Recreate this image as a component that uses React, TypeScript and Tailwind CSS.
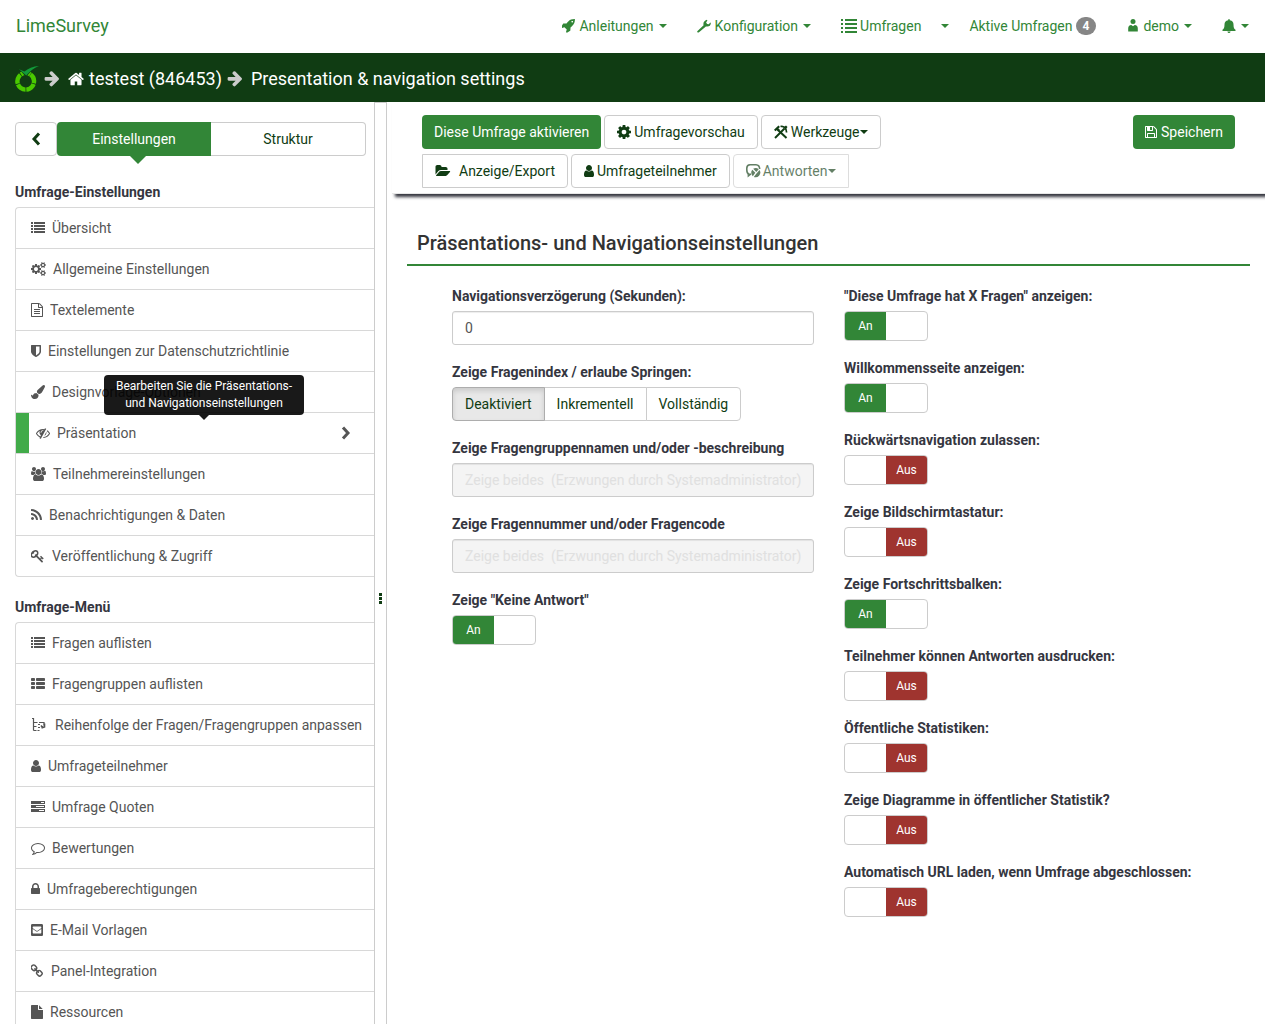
import { useState } from 'react';
import type { ReactNode } from 'react';
import { FaEnvelopeSquare } from 'react-icons/fa';

type GlyphProps = { d: string; box: string; w: string; h?: string };

function Glyph({ d, box, w, h = 'h-[14px]' }: GlyphProps) {
  return (
    <svg viewBox={box} className={`shrink-0 ${w} ${h}`} fill="currentColor" aria-hidden="true">
      <path d={d} />
    </svg>
  );
}

const P = {
  cogs: 'M896 896q0-106-75-181t-181-75-181 75-75 181 75 181 181 75 181-75 75-181zm768 512q0-52-38-90t-90-38-90 38-38 90q0 53 37.5 90.5t90.5 37.5 90.5-37.5 37.5-90.5zm0-1024q0-52-38-90t-90-38-90 38-38 90q0 53 37.5 90.5t90.5 37.5 90.5-37.5 37.5-90.5zm-384 421v185q0 10-7 19.5t-16 10.5l-155 24q-11 35-32 76 34 48 90 115 7 11 7 20 0 12-7 19-23 30-82.5 89.5t-78.5 59.5q-11 0-21-7l-115-90q-37 19-77 31-11 108-23 155-7 24-30 24h-186q-11 0-20-7.5t-10-17.5l-23-153q-34-10-75-31l-118 89q-7 7-20 7-11 0-21-8-144-133-144-160 0-9 7-19 10-14 41-53t47-61q-23-44-35-82l-152-24q-10-1-17-9.5t-7-19.5v-185q0-10 7-19.5t16-10.5l155-24q11-35 32-76-34-48-90-115-7-11-7-20 0-12 7-20 22-30 82-89t79-59q11 0 21 7l115 90q34-18 77-32 11-108 23-154 7-24 30-24h186q11 0 20 7.5t10 17.5l23 153q34 10 75 31l118-89q8-7 20-7 11 0 21 8 144 133 144 160 0 8-7 19-12 16-42 54t-45 60q23 48 34 82l152 23q10 2 17 10.5t7 19.5zm640 533v140q0 16-149 31-12 27-30 52 51 113 51 138 0 4-4 7-122 71-124 71-8 0-46-47t-52-68q-20 2-30 2t-30-2q-14 21-52 68t-46 47q-2 0-124-71-4-3-4-7 0-25 51-138-18-25-30-52-149-15-149-31v-140q0-16 149-31 13-29 30-52-51-113-51-138 0-4 4-7 4-2 35-20t59-34 30-16q8 0 46 46.5t52 67.5q20-2 30-2t30 2q51-71 92-112l6-2q4 0 124 70 4 3 4 7 0 25-51 138 17 23 30 52 149 15 149 31zm0-1024v140q0 16-149 31-12 27-30 52 51 113 51 138 0 4-4 7-122 71-124 71-8 0-46-47t-52-68q-20 2-30 2t-30-2q-14 21-52 68t-46 47q-2 0-124-71-4-3-4-7 0-25 51-138-18-25-30-52-149-15-149-31v-140q0-16 149-31 13-29 30-52-51-113-51-138 0-4 4-7 4-2 35-20t59-34 30-16q8 0 46 46.5t52 67.5q20-2 30-2t30 2q51-71 92-112l6-2q4 0 124 70 4 3 4 7 0 25-51 138 17 23 30 52 149 15 149 31z',
  fileText: 'M1596 380q28 28 48 76t20 88v1152q0 40-28 68t-68 28h-1344q-40 0-68-28t-28-68v-1600q0-40 28-68t68-28h896q40 0 88 20t76 48zm-444-244v376h376q-10-29-22-41l-313-313q-12-12-41-22zm384 1528v-1024h-416q-40 0-68-28t-28-68v-416h-768v1536h1280zm-1024-864q0-14 9-23t23-9h704q14 0 23 9t9 23v64q0 14-9 23t-23 9h-704q-14 0-23-9t-9-23v-64zm736 224q14 0 23 9t9 23v64q0 14-9 23t-23 9h-704q-14 0-23-9t-9-23v-64q0-14 9-23t23-9h704zm0 256q14 0 23 9t9 23v64q0 14-9 23t-23 9h-704q-14 0-23-9t-9-23v-64q0-14 9-23t23-9h704z',
  shield: 'M1344 960v-640h-448v1137q119-63 213-137 235-184 235-360zm192-768v768q0 86-33.5 170.5t-83 150-118 127.5-126.5 103-121 77.5-89.5 49.5-42.5 20q-12 6-26 6t-26-6q-16-7-42.5-20t-89.5-49.5-121-77.5-126.5-103-118-127.5-83-150-33.5-170.5v-768q0-26 19-45t45-19h1152q26 0 45 19t19 45z',
  brush: 'M1615 0q70 0 122.5 46.5t52.5 116.5q0 63-45 151-332 629-465 752-97 91-218 91-126 0-216.5-92.5t-90.5-219.5q0-128 92-212l638-579q59-54 130-54zm-909 1034q39 76 106.5 130t150.5 76l1 71q4 213-129.5 347t-348.5 134q-123 0-218-46.5t-152.5-127.5-86.5-183-29-220q7 5 41 30t62 44.5 59 36.5 46 17q41 0 55-37 25-66 57.5-112.5t69.5-76 88-47.5 103-25.5 125-10.5z',
  eyeSlash: 'M555 1335l78-141q-87-63-136-159t-49-203q0-121 61-225-229 117-381 353 167 258 427 375zm389-759q0-20-14-34t-34-14q-125 0-214.5 89.5t-89.5 214.5q0 20 14 34t34 14 34-14 14-34q0-86 61-147t147-61q20 0 34-14t14-34zm363-191q0 7-1 9-106 189-316 567t-315 566l-49 89q-10 16-28 16-12 0-134-70-16-10-16-28 0-12 44-87-143-65-263.5-173t-208.5-245q-20-31-20-69t20-69q153-235 380-371t496-136q89 0 180 17l54-97q10-16 28-16 5 0 18 6t31 15.5 33 18.5 31.5 18.5 19.5 11.5q16 10 16 27zm37 447q0 139-79 253.5t-209 164.5l280-502q8 45 8 84zm448 128q0 35-20 69-39 64-109 145-150 172-347.5 267t-419.5 95l74-132q212-18 392.5-137t301.5-307q-115-179-282-294l63-112q95 64 182.5 153t144.5 184q20 34 20 69z',
  users: 'M593 896q-162 5-265 128h-134q-82 0-138-40.5t-56-118.5q0-353 124-353 6 0 43.5 21t97.5 42.5 119 21.5q67 0 133-23-5 37-5 66 0 159 81 295zm1071 637q0 120-73 189.5t-194 69.5h-874q-121 0-194-69.5t-73-189.5q0-53 3.5-103.5t14-109 26.5-108.5 43-97.5 62-81 85.5-53.5 111.5-20q10 0 43 21.5t73 48 107 48 135 21.5 135-21.5 107-48 73-48 43-21.5q61 0 111.5 20t85.5 53.5 62 81 43 97.5 26.5 108.5 14 109 3.5 103.5zm-1024-1277q0 106-75 181t-181 75-181-75-75-181 75-181 181-75 181 75 75 181zm704 384q0 159-112.5 271.5t-271.5 112.5-271.5-112.5-112.5-271.5 112.5-271.5 271.5-112.5 271.5 112.5 112.5 271.5zm576 225q0 78-56 118.5t-138 40.5h-134q-103-123-265-128 81-136 81-295 0-29-5-66 66 23 133 23 59 0 119-21.5t97.5-42.5 43.5-21q124 0 124 353zm-128-609q0 106-75 181t-181 75-181-75-75-181 75-181 181-75 181 75 75 181z',
  rss: 'M576 1344q0 80-56 136t-136 56-136-56-56-136 56-136 136-56 136 56 56 136zm512 123q2 28-17 48-18 21-47 21h-135q-25 0-43-16.5t-20-41.5q-22-229-184.5-391.5t-391.5-184.5q-25-2-41.5-20t-16.5-43v-135q0-29 21-47 17-17 43-17h5q160 13 306 80.5t259 181.5q114 113 181.5 259t80.5 306zm512 2q2 27-18 47-18 20-46 20h-143q-26 0-44.5-17.5t-19.5-42.5q-12-215-101-408.5t-231.5-336-336-231.5-408.5-102q-25-1-42.5-19.5t-17.5-43.5v-143q0-28 20-46 18-18 44-18h3q262 13 501.5 120t425.5 294q187 186 294 425.5t120 501.5z',
  key: 'M832 512q0-80-56-136t-136-56-136 56-56 136q0 42 19 83-41-19-83-19-80 0-136 56t-56 136 56 136 136 56 136-56 56-136q0-42-19-83 41 19 83 19 80 0 136-56t56-136zm851 704q0 17-49 66t-66 49q-9 0-28.5-16t-36.5-33-38.5-40-24.5-26l-96 96 220 220q28 28 28 68 0 42-39 81t-81 39q-40 0-68-28l-671-671q-176 131-365 131-163 0-265.5-102.5t-102.5-265.5q0-160 95-313t248-248 313-95q163 0 265.5 102.5t102.5 265.5q0 189-131 365l355 355 96-96q-3-3-26-24.5t-40-38.5-33-36.5-16-28.5q0-17 49-66t66-49q13 0 23 10 6 6 46 44.5t82 79.5 86.5 86 73 78 28.5 41z',
  comment: 'M896 384q-204 0-381.5 69.5t-282 187.5-104.5 255q0 112 71.5 213.5t201.5 175.5l87 50-27 96q-24 91-70 172 152-63 275-171l43-38 57 6q69 8 130 8 204 0 381.5-69.5t282-187.5 104.5-255-104.5-255-282-187.5-381.5-69.5zm896 512q0 174-120 321.5t-326 233-450 85.5q-70 0-145-8-198 175-460 242-49 14-114 22h-5q-15 0-27-10.5t-16-27.5v-1q-3-4-.5-12t2-10 4.5-9.5l6-9 7-8.5 8-9q7-8 31-34.5t34.5-38 31-39.5 32.5-51 27-59 26-76q-157-89-247.5-220t-90.5-281q0-130 71-248.5t191-204.5 286-136.5 348-50.5 348 50.5 286 136.5 191 204.5 71 248.5z',
  lock: 'M640 768h512v-192q0-106-75-181t-181-75-181 75-75 181v192zm832 96v576q0 40-28 68t-68 28h-960q-40 0-68-28t-28-68v-576q0-40 28-68t68-28h32v-192q0-184 132-316t316-132 316 132 132 316v192h32q40 0 68 28t28 68z',
  link: 'M1456 1216q0-40-28-68l-208-208q-28-28-68-28-42 0-72 32 3 3 19 18.5t21.5 21.5 15 19 13 25.5 3.5 27.5q0 40-28 68t-68 28q-15 0-27.5-3.5t-25.5-13-19-15-21.5-21.5-18.5-19q-33 31-33 73 0 40 28 68l206 207q27 27 68 27 40 0 68-26l147-146q28-28 28-67zm-703-705q0-40-28-68l-206-207q-28-28-68-28-39 0-68 27l-147 146q-28 28-28 67 0 40 28 68l208 208q27 27 68 27 42 0 72-31-3-3-19-18.5t-21.5-21.5-15-19-13-25.5-3.5-27.5q0-40 28-68t68-28q15 0 27.5 3.5t25.5 13 19 15 21.5 21.5 18.5 19q33-31 33-73zm895 705q0 120-85 203l-147 146q-83 83-203 83-121 0-204-85l-206-207q-83-83-83-203 0-123 88-209l-88-88q-86 88-208 88-120 0-204-84l-208-208q-84-84-84-204t85-203l147-146q83-83 203-83 121 0 204 85l206 207q83 83 83 203 0 123-88 209l88 88q86-88 208-88 120 0 204 84l208 208q84 84 84 204z',
  file: 'M1152 512v-472q22 14 36 28l408 408q14 14 28 36h-472zm-128 32q0 40 28 68t68 28h544v1056q0 40-28 68t-68 28h-1344q-40 0-68-28t-28-68v-1600q0-40 28-68t68-28h800v544z',
  user: 'M1536 1399q0 109-62.5 187t-150.5 78h-854q-88 0-150.5-78t-62.5-187q0-85 8.5-160.5t31.5-152 58.5-131 94-89 134.5-34.5q131 128 313 128t313-128q76 0 134.5 34.5t94 89 58.5 131 31.5 152 8.5 160.5zm-256-887q0 159-112.5 271.5t-271.5 112.5-271.5-112.5-112.5-271.5 112.5-271.5 271.5-112.5 271.5 112.5 112.5 271.5z',
  rocket: 'M1440 448q0-40-28-68t-68-28-68 28-28 68 28 68 68 28 68-28 28-68zm224-288q0 249-75.5 430.5t-253.5 360.5q-81 80-195 176l-20 379q-2 16-16 26l-384 224q-7 4-16 4-12 0-23-9l-64-64q-13-14-8-32l85-276-281-281-276 85q-3 1-9 1-14 0-23-9l-64-64q-17-19-5-39l224-384q10-14 26-16l379-20q96-114 176-195 188-187 358-258t431-71q14 0 24 9.5t10 22.5z',
  floppy: 'M512 1536h768v-384h-768v384zm896 0h128v-896q0-14-10-38.5t-20-34.5l-281-281q-10-10-34-20t-39-10v416q0 40-28 68t-68 28h-576q-40 0-68-28t-28-68v-416h-128v1280h128v-416q0-40 28-68t68-28h832q40 0 68 28t28 68v416zm-384-928v-320q0-13-9.5-22.5t-22.5-9.5h-192q-13 0-22.5 9.5t-9.5 22.5v320q0 13 9.5 22.5t22.5 9.5h192q13 0 22.5-9.5t9.5-22.5zm640 32v928q0 40-28 68t-68 28h-1344q-40 0-68-28t-28-68v-1344q0-40 28-68t68-28h928q40 0 88 20t76 48l280 280q28 28 48 76t20 88z',
  folder: 'M1879 952q0 31-31 66l-336 396q-43 51-120.5 86.5t-143.5 35.5h-1088q-34 0-60.5-13t-26.5-43q0-31 31-66l336-396q43-51 120.5-86.5t143.5-35.5h1088q34 0 60.5 13t26.5 43zm-343-344v160h-832q-94 0-197 47.5t-164 119.5l-337 396-5 6q0-4-.5-12.5t-.5-12.5v-960q0-92 66-158t158-66h320q92 0 158 66t66 158v32h544q92 0 158 66t66 158z',
  home: 'M1472 992v480q0 26-19 45t-45 19h-384v-384h-256v384h-384q-26 0-45-19t-19-45v-480q0-1 .5-3t.5-3l575-474 575 474q1 2 1 6zm223-69l-62 74q-8 9-21 11h-3q-13 0-21-7l-692-577-692 577q-12 8-24 7-13-2-21-11l-62-74q-8-10-7-23.5t11-21.5l719-599q32-26 76-26t76 26l244 204v-195q0-14 9-23t23-9h192q14 0 23 9t9 23v408l219 182q10 8 11 21.5t-7 23.5z',
  arrow: 'M1600 960q0 54-37 91l-651 651q-39 37-91 37-51 0-90-37l-75-75q-38-38-38-91t38-91l293-293h-704q-52 0-84.5-37.5t-32.5-90.5v-128q0-53 32.5-90.5t84.5-37.5h704l-293-294q-38-36-38-90t38-90l75-75q38-38 90-38 53 0 91 38l651 651q37 35 37 90z',
  cog: 'M1152 896q0-106-75-181t-181-75-181 75-75 181 75 181 181 75 181-75 75-181zm512-109v222q0 12-8 23t-20 13l-185 28q-19 54-39 91 35 50 107 138 10 12 10 25t-9 23q-27 37-99 108t-94 71q-12 0-26-9l-138-108q-44 23-91 38-16 136-29 186-7 28-36 28h-222q-14 0-24.5-8.5t-11.5-21.5l-28-184q-49-16-90-37l-141 107q-10 9-25 9-14 0-25-11-126-114-165-168-7-10-7-23 0-12 8-23 15-21 51-66.5t54-70.5q-27-50-41-99l-183-27q-13-2-21-12.5t-8-23.5v-222q0-12 8-23t19-13l186-28q14-46 39-92-40-57-107-138-10-12-10-24 0-10 9-23 26-36 98.5-107.5t94.5-71.5q13 0 26 10l138 107q44-23 91-38 16-136 29-186 7-28 36-28h222q14 0 24.5 8.5t11.5 21.5l28 184q49 16 90 37l142-107q9-9 24-9 13 0 25 10 129 119 165 170 7 8 7 22 0 12-8 23-15 21-51 66.5t-54 70.5q26 50 41 98l183 28q13 2 21 12.5t8 23.5z',
};

function Caret() {
  return (
    <svg viewBox="0 0 8 4" className="h-1 w-2 shrink-0" fill="currentColor" aria-hidden="true">
      <path d="M0 0h8L4 4z" />
    </svg>
  );
}

function ListIcon() {
  return (
    <svg viewBox="0 0 14 14" className="h-[14px] w-[14px] shrink-0" fill="currentColor" aria-hidden="true">
      <path d="M0 1h2v2H0zM3 1h11v2H3zM0 4h2v2H0zM3 4h11v2H3zM0 7h2v2H0zM3 7h11v2H3zM0 10h2v2H0zM3 10h11v2H3z" />
    </svg>
  );
}

function GroupListIcon() {
  return (
    <svg viewBox="0 0 14 14" className="h-[14px] w-[14px] shrink-0" fill="currentColor" aria-hidden="true">
      <rect x="0" y="1" width="4" height="3" rx="0.8" />
      <rect x="5" y="1" width="9" height="3" rx="0.8" />
      <rect x="0" y="5" width="4" height="3" rx="0.8" />
      <rect x="5" y="5" width="9" height="3" rx="0.8" />
      <rect x="0" y="9" width="4" height="3" rx="0.8" />
      <rect x="5" y="9" width="9" height="3" rx="0.8" />
    </svg>
  );
}

function TasksIcon() {
  return (
    <svg viewBox="0 0 14 14" className="h-[14px] w-[14px] shrink-0" fill="currentColor" fillRule="evenodd" aria-hidden="true">
      <path d="M0 1h14v3H0zM10 2v1h3V2zM0 5h14v3H0zM5 6v1h8V6zM0 9h14v3H0zM8 10v1h5v-1z" />
    </svg>
  );
}

function TreeIcon() {
  return (
    <svg viewBox="0 0 17 15" className="h-[15px] w-[17px] shrink-0" fill="none" stroke="currentColor" aria-hidden="true">
      <path d="M2.500 0v12.500M1 .5h2M2.500 4.500h4M2.500 8.500h3M2.500 12.500h3" strokeWidth="1.200" />
      <path d="M7 6.500h2M7 9.500h2M6.500 12.500h2M8 4.500h5v3" strokeWidth="1.200" />
      <path d="M10 7.500l2 2.500M13.500 5.500v3.500l-3 1" strokeWidth="1.600" />
    </svg>
  );
}

function WrenchIcon() {
  return (
    <svg viewBox="0 0 14 14" className="h-[14px] w-[14px] shrink-0" fill="currentColor" aria-hidden="true">
      <path d="M.3 12.200L6.600 6.200C5.900 4 7 1.700 9.800.8l.6.6-1.300 2.200 1 1.500 1.700.2 1.500-1.800.5.6c.1 2.500-2 4-4.900 3.300L2 13.200c-1 .8-2.200 0-1.700-1z" />
    </svg>
  );
}

function ListLargeIcon() {
  return (
    <svg viewBox="0 0 16 14" className="h-[14px] w-4 shrink-0" fill="currentColor" aria-hidden="true">
      <path d="M0 0h2v2H0zM4 0h12v2H4zM0 4h2v2H0zM4 4h12v2H4zM0 8h2v2H0zM4 8h12v2H4zM0 12h2v2H0zM4 12h12v2H4z" />
    </svg>
  );
}

function PersonIcon() {
  return (
    <svg viewBox="0 0 10 13" className="h-[13px] w-[10px] shrink-0" fill="currentColor" aria-hidden="true">
      <circle cx="5" cy="2.500" r="2.500" />
      <path d="M.2 9.500Q.2 6 3.300 6L5 7.200 6.700 6Q9.800 6 9.800 9.500V12.500H.2z" />
    </svg>
  );
}

function BellIcon() {
  return (
    <svg viewBox="0 0 14 14" className="h-[14px] w-[14px] shrink-0" fill="currentColor" aria-hidden="true">
      <path d="M6.200 1.200Q6.200 0 7 0t.8 1.200C10.500 1.700 11.500 3.300 11.500 5.500c0 3 .6 4.300 2 5.300v1.200H.5v-1.200C1.900 9.800 2.500 8.500 2.500 5.500c0-2.200 1-3.800 3.700-4.300zM5.400 12.500h3.200Q8.300 14 7 14t-1.600-1.500z" />
    </svg>
  );
}

function ToolsIcon() {
  return (
    <svg viewBox="0 0 14 14" className="h-[14px] w-[14px] shrink-0" fill="none" stroke="currentColor" aria-hidden="true">
      <path d="M1 13l9.500-9.500" strokeWidth="2" />
      <path d="M6.500 1.500c3-1 6.300 1.800 6 6" strokeWidth="1.700" />
      <path d="M10 2l2-1.500L13.500 2 12 4z" fill="currentColor" stroke="none" />
      <path d="M4 5l8.500 8" strokeWidth="2" />
      <path d="M.7 5.500L5.200 1.200" strokeWidth="2.200" />
      <path d="M2.500 3.500l2.500 2" strokeWidth="2.500" />
    </svg>
  );
}

function ResponsesIcon() {
  return (
    <svg viewBox="0 0 15 15" className="h-[15px] w-[15px] shrink-0" fill="none" stroke="currentColor" aria-hidden="true">
      <path d="M5 10.200H3Q.8 9.500.8 6V4Q1 1 4 .8h6Q13.500 1 13.700 5" strokeWidth="1.600" />
      <path d="M2.200 10v2.200l2.500-2" strokeWidth="1.200" />
      <path d="M7.200 4.800A4.800 4.800 0 0 1 12.700 5.200L10.300 7.900z" fill="currentColor" stroke="none" />
      <path d="M6.300 5.700l3 3-2.500 3.500A4.700 4.700 0 0 1 6.300 5.700z" fill="currentColor" stroke="none" />
      <path d="M7.800 13l2.700-3.500 3-3.600a4.800 4.800 0 0 1-5.700 7.100z" fill="currentColor" stroke="none" />
    </svg>
  );
}

function LimeLogo() {
  return (
    <svg viewBox="0 0 24 27" className="h-[27px] w-6 shrink-0" fill="none" aria-hidden="true">
      <circle cx="10.700" cy="15.300" r="8.300" stroke="#4ac900" strokeWidth="4.400" strokeDasharray="9.680 0.750" transform="rotate(-54 10.700 15.300)" />
      <path d="M4 3h14L11 11z" fill="#103c13" />
      <path d="M4 3.200l5.500 2.300C13 2.500 18 .3 24 0 18.700 2.200 14.500 5.500 11.300 9.500z" fill="#129b3a" />
    </svg>
  );
}

function Chevron({ dir }: { dir: 'left' | 'right' }) {
  return (
    <svg viewBox="0 0 10 14" className="h-[14px] w-[10px] shrink-0" fill="none" stroke="currentColor" strokeWidth="3" aria-hidden="true">
      <path d={dir === 'left' ? 'M8 1.500L3 7l5 5.500' : 'M2 1.500L7 7l-5 5.500'} />
    </svg>
  );
}

type Item = { label: string; icon: ReactNode; active?: boolean };

const settingsItems: Item[] = [
  { label: 'Übersicht', icon: <ListIcon /> },
  { label: 'Allgemeine Einstellungen', icon: <Glyph d={P.cogs} box="0 0 1920 1792" w="w-[15px]" /> },
  { label: 'Textelemente', icon: <Glyph d={P.fileText} box="128 0 1536 1792" w="w-[12px]" /> },
  { label: 'Einstellungen zur Datenschutzrichtlinie', icon: <Glyph d={P.shield} box="256 0 1280 1792" w="w-[10px]" /> },
  { label: 'Designvorlage-Optionen', icon: <Glyph d={P.brush} box="0 0 1792 1792" w="w-[14px]" /> },
  { label: 'Präsentation', icon: <Glyph d={P.eyeSlash} box="0 0 1792 1792" w="w-[14px]" />, active: true },
  { label: 'Teilnehmereinstellungen', icon: <Glyph d={P.users} box="0 0 1920 1792" w="w-[15px]" /> },
  { label: 'Benachrichtigungen & Daten', icon: <Glyph d={P.rss} box="192 0 1408 1792" w="w-[11px]" /> },
  { label: 'Veröffentlichung & Zugriff', icon: <Glyph d={P.key} box="64 0 1792 1792" w="w-[14px]" /> },
];

const menuItems: Item[] = [
  { label: 'Fragen auflisten', icon: <ListIcon /> },
  { label: 'Fragengruppen auflisten', icon: <GroupListIcon /> },
  { label: 'Reihenfolge der Fragen/Fragengruppen anpassen', icon: <TreeIcon /> },
  { label: 'Umfrageteilnehmer', icon: <Glyph d={P.user} box="256 0 1280 1792" w="w-[10px]" /> },
  { label: 'Umfrage Quoten', icon: <TasksIcon /> },
  { label: 'Bewertungen', icon: <Glyph d={P.comment} box="0 0 1792 1792" w="w-[14px]" /> },
  { label: 'Umfrageberechtigungen', icon: <Glyph d={P.lock} box="320 0 1152 1792" w="w-[9px]" /> },
  { label: 'E-Mail Vorlagen', icon: <FaEnvelopeSquare className="h-[14px] w-[12px] shrink-0" aria-hidden="true" /> },
  { label: 'Panel-Integration', icon: <Glyph d={P.link} box="112 0 1664 1792" w="w-[13px]" /> },
  { label: 'Ressourcen', icon: <Glyph d={P.file} box="128 0 1536 1792" w="w-[12px]" /> },
];

function SideMenu({ title, items }: { title: string; items: Item[] }) {
  return (
    <nav aria-label={title}>
      <h2 className="mb-[5px] font-bold leading-5 text-[#35363f]">{title}</h2>
      <ul className="mb-5 rounded-l border border-r-0 border-[#d8d8d8] text-[#555]">
        {items.map((item, i) => (
          <li key={item.label} className={i > 0 ? 'relative border-t border-[#d8d8d8]' : 'relative'}>
            <a
              href="#"
              className={
                item.active
                  ? 'flex h-10 items-center gap-[7px] border-l-[13px] border-[#41ab49] pr-[23px] pl-[7px]'
                  : 'flex h-10 items-center gap-[7px] pl-[15px]'
              }
            >
              {item.icon}
              <span className="grow whitespace-nowrap">{item.label}</span>
              {item.active && <Chevron dir="right" />}
            </a>
            {item.active && (
              <div role="tooltip" className="absolute bottom-[33px] left-[88px] z-10 flex w-[200px] flex-col items-center">
                <div className="w-full rounded bg-black/90 px-2 py-[3px] text-center text-xs leading-[17px] text-white">
                  Bearbeiten Sie die Präsentations- und Navigationseinstellungen
                </div>
                <svg viewBox="0 0 10 5" className="h-[5px] w-[10px]" aria-hidden="true">
                  <path d="M0 0h10L5 5z" fill="#000" fillOpacity="0.9" />
                </svg>
              </div>
            )}
          </li>
        ))}
      </ul>
    </nav>
  );
}

function Toggle({ id, label, initial }: { id: string; label: string; initial: boolean }) {
  const [on, setOn] = useState(initial);
  return (
    <div>
      <label htmlFor={id} className="mb-[5px] block font-bold text-[#35363f]">
        {label}
      </label>
      <div className="relative flex h-[30px] w-[84px] overflow-hidden rounded border border-[#ccc] text-xs text-white">
        <span className={on ? 'flex flex-1 items-center justify-center bg-[#328637]' : 'flex-1'}>{on && 'An'}</span>
        <span className={on ? 'flex-1' : 'flex flex-1 items-center justify-center bg-[#9f342f]'}>{!on && 'Aus'}</span>
        <input
          id={id}
          type="checkbox"
          role="switch"
          checked={on}
          onChange={(e) => setOn(e.target.checked)}
          className="absolute inset-0 h-full w-full cursor-pointer opacity-0"
        />
      </div>
    </div>
  );
}

function LockedField({ id, label }: { id: string; label: string }) {
  return (
    <div>
      <label htmlFor={id} className="mb-[5px] block font-bold text-[#35363f]">
        {label}
      </label>
      <input
        id={id}
        type="text"
        disabled
        value={'Zeige beides  (Erzwungen durch Systemadministrator)'}
        className="block h-[34px] w-full rounded-[3px] border border-[#ccc] bg-[#f4f4f4] px-3 text-[#e0e0e0] shadow-[inset_0_1px_1px_rgba(0,0,0,0.075)]"
      />
    </div>
  );
}

const toggles: [string, string, boolean][] = [
  ['xquestions', '"Diese Umfrage hat X Fragen" anzeigen:', true],
  ['welcome', 'Willkommensseite anzeigen:', true],
  ['allowprev', 'Rückwärtsnavigation zulassen:', false],
  ['keyboard', 'Zeige Bildschirmtastatur:', false],
  ['progress', 'Zeige Fortschrittsbalken:', true],
  ['print', 'Teilnehmer können Antworten ausdrucken:', false],
  ['statistics', 'Öffentliche Statistiken:', false],
  ['graphs', 'Zeige Diagramme in öffentlicher Statistik?', false],
  ['autoredirect', 'Automatisch URL laden, wenn Umfrage abgeschlossen:', false],
];

function IndexChoice() {
  const [value, setValue] = useState('Deaktiviert');
  return (
    <fieldset>
      <legend className="mb-[5px] font-bold text-[#35363f]">Zeige Fragenindex / erlaube Springen:</legend>
      <div className="flex">
        {['Deaktiviert', 'Inkrementell', 'Vollständig'].map((option) => (
          <label
            key={option}
            className={
              value === option
                ? 'relative z-10 -ml-px flex h-[34px] items-center border border-[#adadad] bg-[#e8e8e8] px-3 text-[#103c13] shadow-[inset_0_3px_5px_rgba(0,0,0,0.125)] first:ml-0 first:rounded-l last:rounded-r'
                : 'relative -ml-px flex h-[34px] items-center border border-[#ccc] bg-white px-3 text-[#103c13] first:ml-0 first:rounded-l last:rounded-r'
            }
          >
            <input
              type="radio"
              name="questionindex"
              checked={value === option}
              onChange={() => setValue(option)}
              className="sr-only"
            />
            {option}
          </label>
        ))}
      </div>
    </fieldset>
  );
}

const toolButton = 'flex h-[34px] items-center border border-[#ccc] bg-white px-3 text-[#103c13]';

export default function App() {
  return (
    <div className="flex h-screen flex-col overflow-hidden bg-white font-['Roboto',sans-serif] text-sm leading-5">
      <header className="flex h-[53px] shrink-0 items-center justify-between px-4 pb-[2px] text-[#328637]">
        <a href="#" className="text-lg leading-5">
          LimeSurvey
        </a>
        <nav className="flex items-center" aria-label="Hauptmenü">
          <a href="#" className="mr-[30px] flex items-center gap-[5px]">
            <span className="flex items-center gap-[3px]">
              <Glyph d={P.rocket} box="128 128 1664 1664" w="w-[14px]" />
              Anleitungen
            </span>
            <Caret />
          </a>
          <a href="#" className="mr-[30px] flex items-center gap-[5px]">
            <span className="flex items-center gap-1">
              <WrenchIcon />
              Konfiguration
            </span>
            <Caret />
          </a>
          <a href="#" className="mr-5 flex items-center gap-[3px]">
            <ListLargeIcon />
            Umfragen
          </a>
          <button type="button" aria-label="Umfragen-Menü" className="mr-5 flex items-center">
            <Caret />
          </button>
          <a href="#" className="mr-8 flex items-center gap-[3px]">
            Aktive Umfragen
            <span className="rounded-full bg-[#868686] px-[7px] text-xs leading-[18px] font-bold text-white">4</span>
          </a>
          <a href="#" className="mr-[30px] flex items-center gap-[5px]">
            <PersonIcon />
            demo
            <Caret />
          </a>
          <button type="button" aria-label="Benachrichtigungen" className="flex items-center gap-[5px]">
            <BellIcon />
            <Caret />
          </button>
        </nav>
      </header>

      <div className="flex h-[49px] shrink-0 items-center gap-[5px] bg-[#103c13] pt-[3px] pl-[15px] text-lg text-white">
        <LimeLogo />
        <span className="mr-1 text-[#ccc]">
          <Glyph d={P.arrow} box="64 176 1536 1600" w="w-[15px]" h="h-4" />
        </span>
        <a href="#" className="flex items-center gap-[5px]">
          <Glyph d={P.home} box="64 192 1664 1408" w="w-4" h="h-[14px]" />
          testest (846453)
        </a>
        <span className="mr-1 text-[#ccc]">
          <Glyph d={P.arrow} box="64 176 1536 1600" w="w-[15px]" h="h-4" />
        </span>
        <span>Presentation &amp; navigation settings</span>
      </div>

      <div className="flex min-h-0 grow">
        <aside className="w-[374px] shrink-0 overflow-hidden pt-5 pl-[15px]">
          <div className="mr-2 mb-[26px] flex">
            <button
              type="button"
              aria-label="Zurück"
              className="flex h-[34px] w-[42px] items-center justify-center rounded border border-[#ccc] text-[#103c13]"
            >
              <Chevron dir="left" />
            </button>
            <button type="button" className="relative h-[34px] flex-1 rounded-l bg-[#328637] text-white">
              Einstellungen
              <svg viewBox="0 0 16 8" className="absolute top-full left-1/2 -ml-1 h-2 w-4" aria-hidden="true">
                <path d="M0 0h16L8 8z" fill="#328637" />
              </svg>
            </button>
            <button type="button" className="h-[34px] flex-1 rounded-r border border-l-0 border-[#ccc] text-[#103c13]">
              Struktur
            </button>
          </div>
          <SideMenu title="Umfrage-Einstellungen" items={settingsItems} />
          <SideMenu title="Umfrage-Menü" items={menuItems} />
        </aside>

        <div className="flex w-[13px] shrink-0 justify-center border border-b-0 border-[#ccc] pt-[490px] text-[#103c13]">
          <svg viewBox="0 0 3 11" className="h-[11px] w-[3px]" fill="currentColor" aria-hidden="true">
            <path d="M0 0h3v3H0zM0 4h3v3H0zM0 8h3v3H0z" />
          </svg>
        </div>

        <main className="min-w-0 grow overflow-hidden">
          <div className="ml-[5px] flex items-start justify-between border-b border-[#e7e7e7] pt-[13px] pr-[30px] pb-[5px] pl-[30px] shadow-[3px_3px_3px_#35363f]">
            <div className="flex flex-col gap-[5px]">
              <div className="flex gap-[3px]">
                <button type="button" className="h-[34px] rounded bg-[#328637] px-3 text-white">
                  Diese Umfrage aktivieren
                </button>
                <button type="button" className={`gap-[3px] rounded ${toolButton}`}>
                  <Glyph d={P.cog} box="128 128 1536 1536" w="w-[14px]" />
                  Umfragevorschau
                </button>
                <button type="button" className={`gap-[3px] rounded ${toolButton}`}>
                  <ToolsIcon />
                  <span className="flex items-center">
                    Werkzeuge
                    <Caret />
                  </span>
                </button>
              </div>
              <div className="flex gap-[3px]">
                <button type="button" className={`gap-2 rounded-r ${toolButton}`}>
                  <Glyph d={P.folder} box="0 0 1920 1792" w="w-4" />
                  Anzeige/Export
                </button>
                <button type="button" className={`gap-[3px] rounded ${toolButton}`}>
                  <Glyph d={P.user} box="256 0 1280 1792" w="w-[10px]" />
                  Umfrageteilnehmer
                </button>
                <button type="button" disabled className={`gap-[2px] rounded-l opacity-65 ${toolButton}`}>
                  <ResponsesIcon />
                  <span className="flex items-center">
                    Antworten
                    <Caret />
                  </span>
                </button>
              </div>
            </div>
            <button type="button" className="flex h-[34px] items-center gap-1 rounded bg-[#328637] px-3 text-white">
              <Glyph d={P.floppy} box="128 0 1536 1792" w="w-[12px]" />
              Speichern
            </button>
          </div>

          <section className="mt-[38px] mr-[15px] ml-5">
            <h1 className="border-b-2 border-[#328637] pb-[10px] pl-[10px] text-xl leading-[22px] font-medium text-[#333]">
              Präsentations- und Navigationseinstellungen
            </h1>
            <form className="grid grid-cols-2 items-start gap-[30px] pt-5 pr-11 pl-[45px]">
              <div className="flex flex-col gap-[17px]">
                <div>
                  <label htmlFor="navdelay" className="mb-[5px] block font-bold text-[#35363f]">
                    Navigationsverzögerung (Sekunden):
                  </label>
                  <input
                    id="navdelay"
                    type="text"
                    defaultValue="0"
                    className="block h-[34px] w-full rounded-[3px] border border-[#ccc] bg-white px-3 text-[#555] shadow-[inset_0_1px_1px_rgba(0,0,0,0.075)]"
                  />
                </div>
                <IndexChoice />
                <LockedField id="groupinfo" label="Zeige Fragengruppennamen und/oder -beschreibung" />
                <LockedField id="qnumcode" label="Zeige Fragennummer und/oder Fragencode" />
                <Toggle id="noanswer" label={'Zeige "Keine Antwort"'} initial={true} />
              </div>
              <div className="flex flex-col gap-[17px]">
                {toggles.map(([id, label, initial]) => (
                  <Toggle key={id} id={id} label={label} initial={initial} />
                ))}
              </div>
            </form>
          </section>
        </main>
      </div>
    </div>
  );
}
